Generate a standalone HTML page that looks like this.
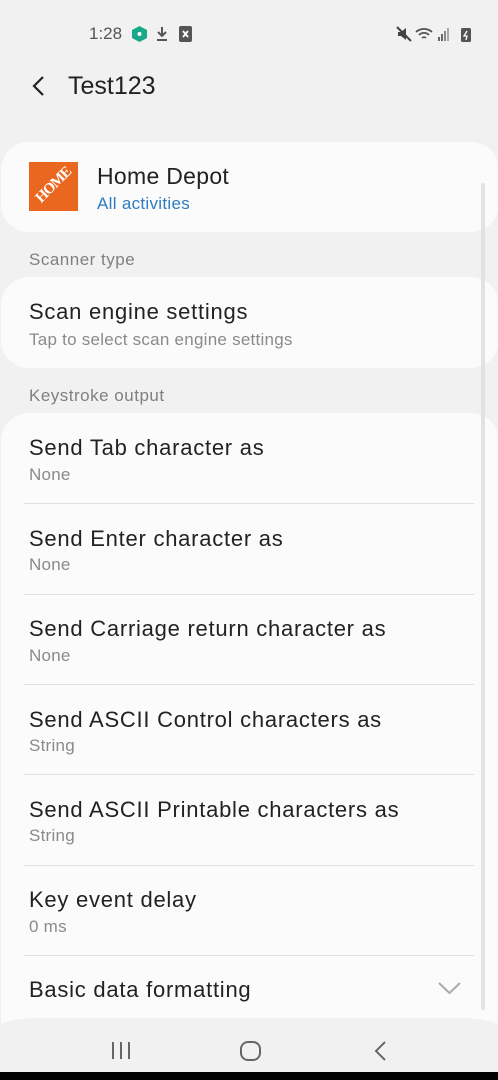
<!DOCTYPE html>
<html><head><style>
*{margin:0;padding:0;box-sizing:border-box}
body{width:498px;height:1080px;background:#f1f1f1;font-family:"Liberation Sans",Roboto,sans-serif;position:relative;overflow:hidden;color:#222}
.abs{position:absolute}
.card{position:absolute;left:1px;right:-1px;background:#fbfbfb;border-radius:28px}
.t{position:absolute;left:29px;font-size:22px;letter-spacing:0.75px;color:#222}
.s{position:absolute;left:29px;font-size:17px;letter-spacing:0.25px;color:#8a8a8a}
.hdr{position:absolute;left:29px;font-size:17px;letter-spacing:0.5px;color:#808080}
.div{position:absolute;left:24px;right:24px;height:1px;background:#e0e0e0}
</style></head><body>
<div class="abs" style="left:89px;top:24px;font-size:17px;color:#555">1:28</div>
<svg class="abs" style="left:132px;top:26px" width="15" height="16" viewBox="0 0 15 16"><polygon points="7.5,0 15,4 15,12 7.5,16 0,12 0,4" fill="#1aa88a"/><circle cx="7.5" cy="8" r="2" fill="#fff"/></svg>
<svg class="abs" style="left:155px;top:26px" width="14" height="16" viewBox="0 0 14 16"><path d="M7 1v9M3 6l4 4 4-4M2 14h10" stroke="#555" stroke-width="2" fill="none"/></svg>
<svg class="abs" style="left:179px;top:26px" width="13" height="16" viewBox="0 0 13 16"><rect width="13" height="16" rx="2" fill="#555"/><path d="M4 5l5 6M9 5l-5 6" stroke="#fff" stroke-width="1.8"/></svg>
<svg class="abs" style="left:396px;top:26px" width="80" height="16" viewBox="0 0 80 16"><path d="M2 6h3l5-4v12l-5-4H2z" fill="#444"/><path d="M1 1l14 14" stroke="#444" stroke-width="2"/><path d="M20 6a12 12 0 0 1 16 0M23 9a7 7 0 0 1 10 0M26 12a3 3 0 0 1 4 0" stroke="#555" stroke-width="1.8" fill="none"/><rect x="42" y="11" width="2" height="4" fill="#666"/><rect x="45" y="8" width="2" height="7" fill="#666"/><rect x="48" y="5" width="2" height="10" fill="#888"/><rect x="51" y="2" width="2" height="13" fill="#aaa"/><rect x="65" y="2" width="10" height="14" rx="1.5" fill="#555"/><path d="M71 5l-3 5h3l-1 4" stroke="#fff" stroke-width="1.3" fill="none"/></svg>
<svg class="abs" style="left:31px;top:75px" width="14" height="22" viewBox="0 0 14 22"><path d="M12 2L3 11l9 9" stroke="#222" stroke-width="2.2" fill="none"/></svg>
<div class="abs" style="left:68px;top:72px;font-size:25px;color:#222">Test123</div>

<div class="card" style="top:142px;height:90px"></div>
<div class="abs" style="left:29px;top:162px;width:49px;height:49px;background:#e9671f;overflow:hidden"><div style="position:absolute;left:-6px;top:15px;width:62px;transform:rotate(-45deg);color:#fff;font:bold 15px 'Liberation Serif',serif;text-align:center;letter-spacing:-1px">HOME</div></div>
<div class="abs" style="left:97px;top:163px;font-size:23px;letter-spacing:0.3px;color:#222">Home Depot</div>
<div class="abs" style="left:97px;top:194px;font-size:17px;letter-spacing:0.3px;color:#2f7bc0">All activities</div>

<div class="hdr" style="top:250px">Scanner type</div>
<div class="card" style="top:277px;height:91px"></div>
<div class="t" style="top:299px">Scan engine settings</div>
<div class="s" style="top:330px">Tap to select scan engine settings</div>

<div class="hdr" style="top:386px">Keystroke output</div>
<div class="card" style="top:413px;height:640px"></div>
<div class="t" style="top:435px">Send Tab character as</div><div class="s" style="top:465px">None</div>
<div class="div" style="top:503px"></div>
<div class="t" style="top:526px">Send Enter character as</div><div class="s" style="top:555px">None</div>
<div class="div" style="top:594px"></div>
<div class="t" style="top:616px">Send Carriage return character as</div><div class="s" style="top:646px">None</div>
<div class="div" style="top:684px"></div>
<div class="t" style="top:707px">Send ASCII Control characters as</div><div class="s" style="top:736px">String</div>
<div class="div" style="top:774px"></div>
<div class="t" style="top:797px">Send ASCII Printable characters as</div><div class="s" style="top:826px">String</div>
<div class="div" style="top:865px"></div>
<div class="t" style="top:887px">Key event delay</div><div class="s" style="top:917px">0 ms</div>
<div class="div" style="top:955px"></div>
<div class="t" style="top:977px">Basic data formatting</div>
<svg class="abs" style="left:438px;top:981px" width="23" height="14" viewBox="0 0 23 14"><path d="M1 2l10.5 10L22 2" stroke="#aaa" stroke-width="2" fill="none"/></svg>
<div class="abs" style="left:481px;top:183px;width:4px;height:827px;background:#e2e2e2;border-radius:2px"></div>

<div class="abs" style="left:0;top:1018px;width:498px;height:54px;background:#f1f1f1;border-top-left-radius:40px 8px;border-top-right-radius:40px 8px"></div>
<svg class="abs" style="left:110px;top:1040px" width="22" height="20" viewBox="0 0 22 20"><path d="M3 2v17M11 2v17M19 2v17" stroke="#666" stroke-width="2"/></svg>
<svg class="abs" style="left:239px;top:1040px" width="24" height="22" viewBox="0 0 24 22"><rect x="2" y="2" width="19" height="18" rx="7" stroke="#666" stroke-width="2" fill="none"/></svg>
<svg class="abs" style="left:372px;top:1040px" width="16" height="22" viewBox="0 0 16 22"><path d="M13 2L4 11l9 9" stroke="#666" stroke-width="2" fill="none"/></svg>
<div class="abs" style="left:0;top:1072px;width:498px;height:8px;background:#000"></div>
</body></html>
